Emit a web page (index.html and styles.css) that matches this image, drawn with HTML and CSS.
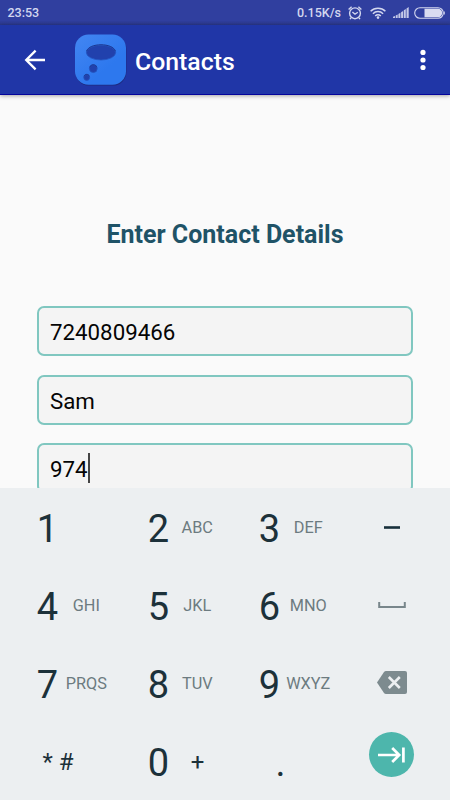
FILE: index.html
```html
<!DOCTYPE html>
<html lang="en">
<head>
    <meta charset="UTF-8">
    <meta name="viewport" content="width=device-width, initial-scale=1.0">
    <title>Contacts</title>
    <link rel="stylesheet" href="styles.css">
</head>
<body>

<div class="status-bar">
    <span class="time">23:53</span>
    <span class="speed">0.15K/s</span>
    <svg class="alarm" width="14" height="14" viewBox="0 0 14 14" fill="none" stroke="#d3d7ef" stroke-width="1.4">
        <circle cx="7" cy="7.3" r="5.4"/>
        <path d="M0.6 3.6 3.6 0.8M13.4 3.6 10.4 0.8M4.4 6 7 8.2 9.8 6.2M3.2 11.6 2 13.2M10.8 11.6 12 13.2"/>
    </svg>
    <svg class="wifi" width="16" height="12" viewBox="0 0 16 12" fill="none" stroke="#d3d7ef" stroke-width="1.5">
        <path d="M0.6 4.3a10.6 10.6 0 0 1 14.8 0M2.9 6.7a7.3 7.3 0 0 1 10.2 0M5.2 9a4 4 0 0 1 5.6 0"/>
        <circle cx="8" cy="10.6" r="1.3" fill="#d3d7ef" stroke="none"/>
    </svg>
    <svg class="signal" width="16" height="11" viewBox="0 0 16 11" fill="#c3c8e8">
        <path d="M0 11V9.8L2 9v2zM2.7 11V8.5l2-1V11zM5.4 11V7l2-1.2V11zM8.1 11V5.2l2-1.2V11zM10.8 11V3.3l2-1.4V11zM13.5 11V1.4L15.7 0v11z"/>
    </svg>
    <svg class="battery" width="31" height="12" viewBox="0 0 31 12">
        <rect x="0.7" y="0.7" width="28.6" height="10.6" rx="5.3" fill="none" stroke="#d3d7ef" stroke-width="1.1"/>
        <path d="M10.5 1.8H24a4.2 4.2 0 0 1 0 8.4H10.5z" fill="#d9dcf1"/>
        <path d="M30.3 4.5v3" stroke="#d3d7ef"/>
    </svg>
</div>

<div class="app-bar">
    <svg class="back" width="22" height="22" viewBox="0 0 22 22" fill="none" stroke="#fff" stroke-width="2.3">
        <path d="M21 11H2.5M11.6 1.6 2.2 11l9.4 9.4"/>
    </svg>
    <svg class="logo" width="54" height="54" viewBox="0 0 54 54">
        <defs>
            <linearGradient id="tile" x1="0" y1="0" x2="0.6" y2="0.7">
                <stop offset="0" stop-color="#4386f2"/>
                <stop offset="1" stop-color="#2d78ee"/>
            </linearGradient>
        </defs>
        <rect x="1.4" y="2.4" width="51" height="50.2" rx="13.5" fill="#1c2b80"/>
        <rect x="1" y="1.5" width="51" height="50.2" rx="13.5" fill="url(#tile)"/>
        <g fill="#2141ad" stroke="#2355c0" stroke-width="0.8">
            <ellipse cx="27" cy="19.6" rx="14.6" ry="7.4"/>
            <circle cx="19.3" cy="35.6" r="3.9"/>
            <circle cx="12.7" cy="44.5" r="2.9"/>
        </g>
        <path d="M12.6 18.2C15 9.6 39 9.6 41.4 18.2M15.8 34.3c1-3.4 6-3.4 7 0M10 43.3c.9-2.6 4.5-2.6 5.4 0" fill="none" stroke="#1d3792" stroke-width="1"/>
    </svg>
    <h1>Contacts</h1>
    <svg class="more" width="6" height="22" viewBox="0 0 6 22" fill="#fff">
        <circle cx="3" cy="3.4" r="2.6"/>
        <circle cx="3" cy="11" r="2.6"/>
        <circle cx="3" cy="18.5" r="2.6"/>
    </svg>
</div>

<div class="content">
    <h2>Enter Contact Details</h2>
    <div class="field">7240809466</div>
    <div class="field">Sam</div>
    <div class="field">974<span class="cursor"></span></div>
</div>

<div class="keypad">
    <div class="key"><span class="digit">1</span></div>
    <div class="key"><span class="digit">2</span><span class="letters">ABC</span></div>
    <div class="key"><span class="digit">3</span><span class="letters">DEF</span></div>
    <div class="key action">
        <svg width="16" height="3" viewBox="0 0 16 3"><rect y="0.2" width="16" height="2.6" fill="#17303b"/></svg>
    </div>

    <div class="key"><span class="digit">4</span><span class="letters">GHI</span></div>
    <div class="key"><span class="digit">5</span><span class="letters">JKL</span></div>
    <div class="key"><span class="digit">6</span><span class="letters">MNO</span></div>
    <div class="key action">
        <svg width="28" height="6" viewBox="0 0 28 6" fill="none" stroke="#78868b" stroke-width="2">
            <path d="M1.2 0v5h25.6V0"/>
        </svg>
    </div>

    <div class="key"><span class="digit">7</span><span class="letters">PRQS</span></div>
    <div class="key"><span class="digit">8</span><span class="letters">TUV</span></div>
    <div class="key"><span class="digit">9</span><span class="letters">WXYZ</span></div>
    <div class="key action">
        <svg class="backspace" width="30" height="23" viewBox="0 0 30 23">
            <path d="M9 0h19a2 2 0 0 1 2 2v19a2 2 0 0 1-2 2H9q-1.2 0-2-1L0 11.5 7 1q.8-1 2-1z" fill="#7d8b8f"/>
            <path d="m11.8 6 11 11m0-11-11 11" stroke="#eceff1" stroke-width="2.6"/>
        </svg>
    </div>

    <div class="key"><span class="symbols">* #</span></div>
    <div class="key"><span class="digit">0</span><span class="plus">+</span></div>
    <div class="key"><span class="dot">.</span></div>
    <div class="key action">
        <div class="enter">
            <svg width="27" height="16" viewBox="0 0 27 16" fill="none" stroke="#fff" stroke-width="2.7">
                <path d="M0 8h21M14.2 1l7 7-7 7M25.4 0.5v15"/>
            </svg>
        </div>
    </div>
</div>

</body>
</html>
```
FILE: styles.css
```css
* {
    box-sizing: border-box;
}
body {
    margin: 0;
    width: 450px;
    height: 800px;
    overflow: hidden;
    display: flex;
    flex-direction: column;
    font-family: Roboto, sans-serif;
    background-color: #fafafa;
}
svg {
    display: block;
    flex: none;
}
.status-bar {
    flex: none;
    height: 25px;
    padding: 0 5px 0 7.5px;
    display: flex;
    align-items: center;
    background: linear-gradient(#303f9f 82%, #2a3789);
    color: #d3d7ef;
    font-size: 12.5px;
    font-weight: 500;
}
.speed {
    margin-left: auto;
}
.alarm {
    margin-left: 7px;
}
.wifi {
    margin-left: 8px;
}
.signal {
    margin-left: 7px;
}
.battery {
    margin-left: 5px;
}
.app-bar {
    flex: none;
    position: relative;
    height: 70px;
    padding: 0 24px;
    display: flex;
    align-items: center;
    background-color: #2036a7;
    border-bottom: 1px solid #04049c;
    box-shadow: 0 1px 4px rgba(0, 0, 0, 0.35);
}
.logo {
    margin: 1px 0 0 27.5px;
}
.app-bar h1 {
    margin: 3px 0 0 7.5px;
    font-size: 24.8px;
    font-weight: 500;
    color: #fff;
}
.more {
    margin-left: auto;
}
.content {
    height: 393px;
    padding: 125px 37px 0;
    overflow: hidden;
}
.content h2 {
    height: 30px;
    margin: 0 0 56px;
    line-height: 30px;
    font-size: 25px;
    font-weight: bold;
    text-align: center;
    color: #1f5367;
}
.field {
    height: 50px;
    margin-bottom: 18.6px;
    padding: 2px 11px 0;
    display: flex;
    align-items: center;
    border: 2px solid #80c7c0;
    border-radius: 7px;
    background-color: #f4f4f4;
    font-size: 22.3px;
    color: #050505;
}
.cursor {
    width: 2px;
    height: 30px;
    margin-top: -3px;
    background-color: #444;
}
.keypad {
    flex: none;
    height: 312px;
    display: grid;
    grid-template-columns: 111px 111px 111px 1fr;
    grid-template-rows: repeat(4, 78px);
    background-color: #eceff1;
    color: #1c313a;
}
.key {
    padding-left: 28.5px;
    display: flex;
    align-items: center;
}
.digit {
    width: 38px;
    padding-top: 3px;
    text-align: center;
    font-size: 38px;
}
.letters {
    width: 39.5px;
    display: flex;
    justify-content: center;
    font-size: 16.3px;
    color: #6c7b80;
}
.action {
    padding-left: 0;
    justify-content: center;
}
.backspace {
    margin-bottom: 2px;
}
.symbols {
    padding: 2px 0 0 14px;
    font-size: 24px;
}
.plus {
    width: 40px;
    padding-top: 2px;
    text-align: center;
    font-size: 24px;
}
.dot {
    width: 60px;
    padding-top: 3px;
    text-align: center;
    font-size: 38px;
}
.enter {
    width: 45px;
    height: 45px;
    margin-bottom: 13px;
    display: flex;
    align-items: center;
    justify-content: center;
    border-radius: 50%;
    background-color: #4db6ac;
}
```
